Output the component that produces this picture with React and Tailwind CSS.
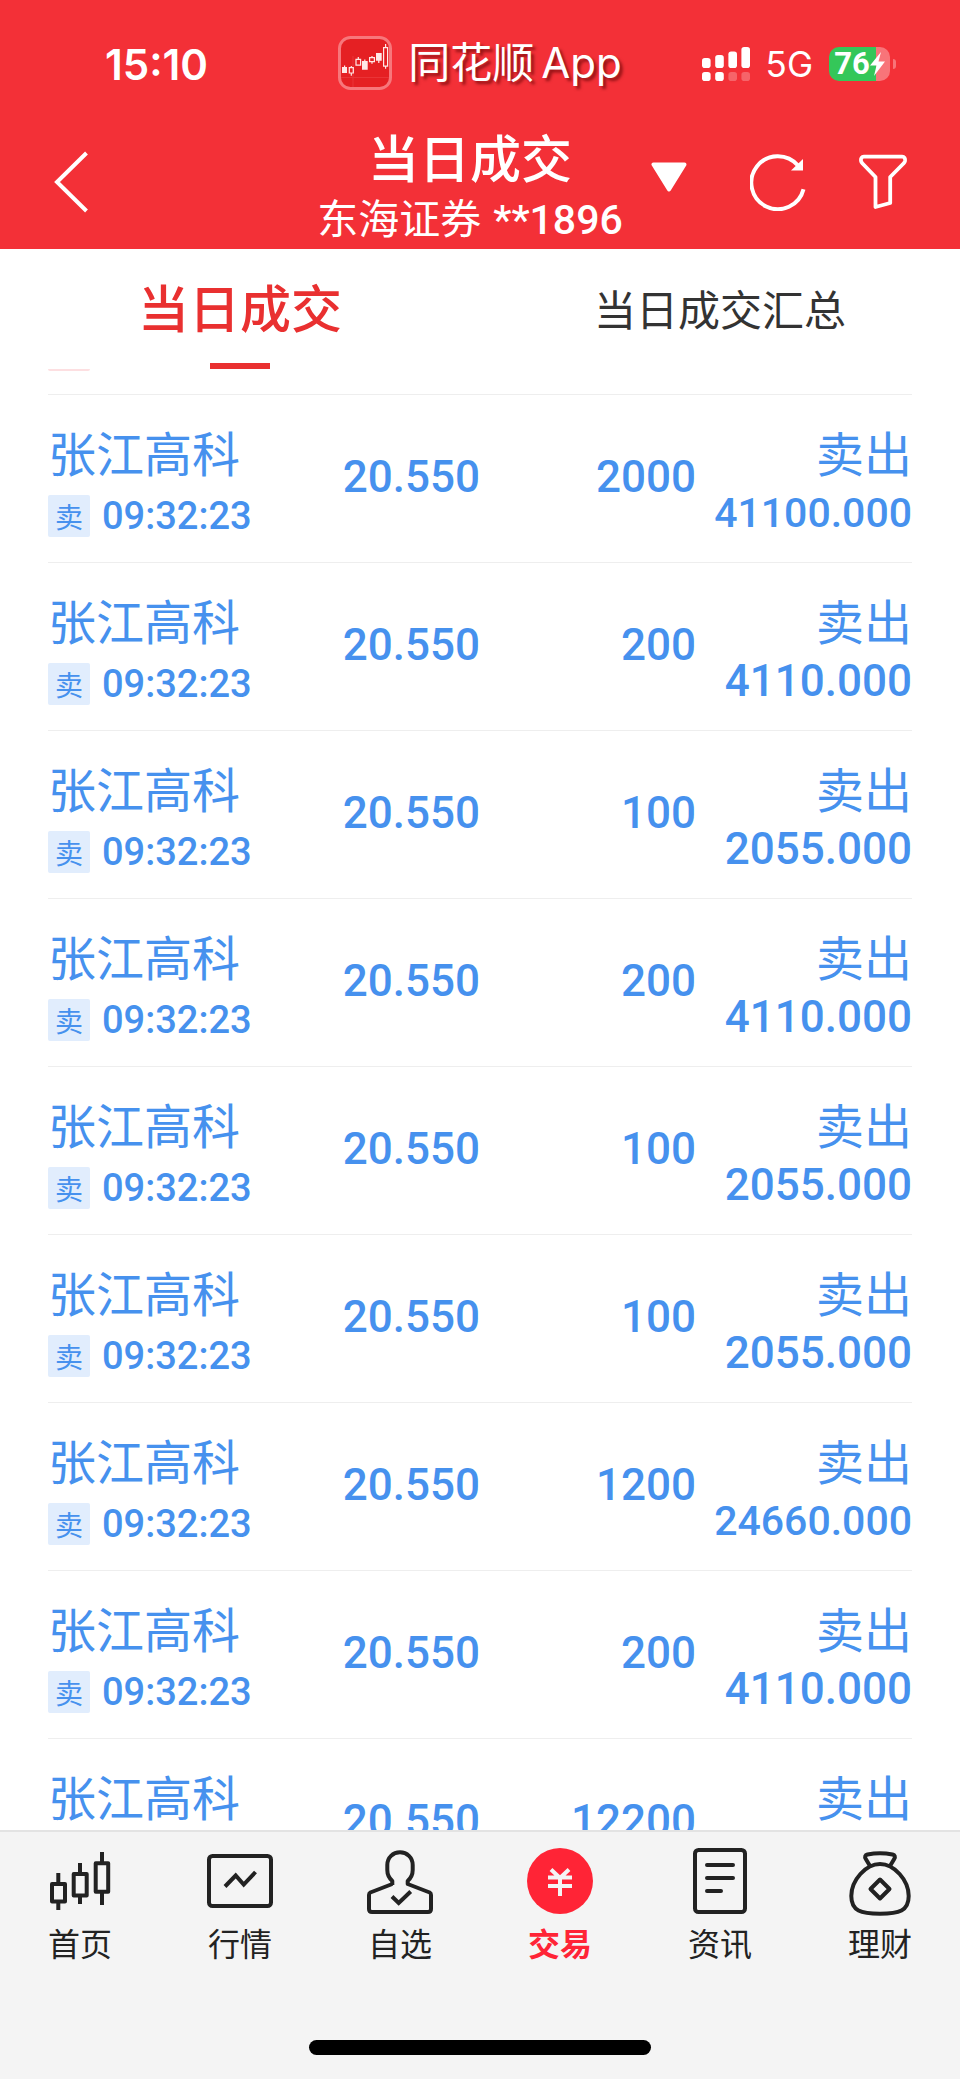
import React from "react";

const CJK = "font-['Noto_Sans_CJK_SC',sans-serif]";
const NUM = "font-['Roboto','Noto_Sans_CJK_SC',sans-serif]";
const SYS = "font-['Inter','Noto_Sans_CJK_SC',sans-serif]";

const trades = [
    { qty: "2000", amount: "41100.000" },
    { qty: "200", amount: "4110.000" },
    { qty: "100", amount: "2055.000" },
    { qty: "200", amount: "4110.000" },
    { qty: "100", amount: "2055.000" },
    { qty: "100", amount: "2055.000" },
    { qty: "1200", amount: "24660.000" },
    { qty: "200", amount: "4110.000" },
    { qty: "12200", amount: "250710.000" },
].map((t) => ({ name: "张江高科", time: "09:32:23", price: "20.550", ...t }));

function AppBadge() {
    return (
        <svg width="54" height="54" viewBox="0 0 54 54" aria-hidden="true">
            <rect x="1.5" y="1.5" width="51" height="51" rx="11" fill="#e52023" stroke="#f7777b" strokeWidth="3" />
            <path d="M3 41.5h48M15 20v31" stroke="#f0494c" strokeWidth="1" opacity=".5" />
            <g fill="#ffe9e6">
                <path d="M4 31h5v6H4zM6 29.500h1.200V32H6zM24 25h5.700v8.700H24zM26.200 23.500h1.200V26h-1.200zM38 17h5.700v7.700H38zM40.200 24h1.200v3h-1.200z" />
            </g>
            <g fill="none" stroke="#ffe9e6" strokeWidth="1.2">
                <path d="M11.300 31.600h4v5.400h-4zM13.300 30v1.600M13.300 37v2.700M18 23.300h4.600v5.800H18zM20.300 21v2.300M31.600 21.600h4.800v4h-4.800zM34 20v1.600M34 25.600v2.200M45.600 11.600h4v18.600h-4zM47.600 8v3.600M47.600 30.200v2.600" />
            </g>
        </svg>
    );
}

function Signal() {
    return (
        <svg width="48" height="34" viewBox="0 0 48 34" fill="#fff" aria-hidden="true">
            <rect x="0" y="11" width="8.600" height="10" rx="2.800" />
            <rect x="13.200" y="8" width="8.600" height="13" rx="2.800" />
            <rect x="26.400" y="4.500" width="8.600" height="16.500" rx="2.800" />
            <rect x="39.400" y="0" width="8.600" height="21" rx="2.800" />
            <rect x="0" y="25" width="8.600" height="9" rx="2.800" />
            <rect x="13.200" y="25" width="8.600" height="9" rx="2.800" />
            <rect x="26.400" y="25" width="8.600" height="9" rx="2.800" opacity=".25" />
            <rect x="39.400" y="25" width="8.600" height="9" rx="2.800" opacity=".25" />
        </svg>
    );
}

function Battery() {
    return (
        <div className="flex items-center">
            <div className="flex h-[34px] w-[61px] items-center justify-center rounded-[10px] bg-linear-to-r from-[#34c759] from-77% to-[#f87479] to-77%">
                <span className="font-['Roboto',sans-serif] text-[31px] leading-[34px] font-bold">76</span>
                <svg width="15" height="24" viewBox="0 0 15 24" fill="#fff" aria-hidden="true">
                    <path d="M11 0 0 13.500h6.500L4 24 15 9.500H8.500z" />
                </svg>
            </div>
            <div className="ml-[3px] h-[10px] w-[3px] rounded-r-full bg-[#f87479]" />
        </div>
    );
}

function StatusBar() {
    return (
        <div className={`grid h-[126px] grid-cols-[1fr_auto_1fr] items-center ${SYS}`}>
            <span className="pt-1 pl-[105px] text-[42px] leading-[48px] font-semibold">15:10</span>
            <div className="flex items-center gap-4">
                <AppBadge />
                <div className="flex gap-[7px] text-[42px] leading-[48px] [text-shadow:3px_3px_3px_rgba(90,0,0,0.6)]">
                    <span>同花顺</span>
                    <span>App</span>
                </div>
            </div>
            <div className="flex items-center justify-end gap-4 pt-[2px] pr-16">
                <Signal />
                <span className="text-[35px] leading-[40px]">5G</span>
                <Battery />
            </div>
        </div>
    );
}

function TitleBar() {
    return (
        <div className="grid h-[123px] grid-cols-[1fr_auto_1fr] pr-[52px] pl-8">
            <button aria-label="返回" className="h-[112px] w-[72px] pl-[22px]">
                <svg width="34" height="62" viewBox="0 0 34 62" fill="none" stroke="#fff" strokeWidth="4">
                    <path d="M32.500 2 3 31l29.500 29" />
                </svg>
            </button>
            <div className="flex flex-col items-center">
                <h1 className={`text-[51px] leading-[60px] font-medium ${CJK}`}>当日成交</h1>
                <p className="flex items-baseline gap-3 text-[41px] leading-[60px]">
                    <span className={CJK}>东海证券</span>
                    <span className={`font-medium ${NUM}`}>**1896</span>
                </p>
            </div>
            <div className="flex h-[112px] items-center justify-end gap-[52px]">
                <button aria-label="切换账户" className="mr-[11px]">
                    <svg width="36" height="40" viewBox="0 0 36 40" fill="#fff" stroke="#fff" strokeWidth="4" strokeLinejoin="round">
                        <path d="M2.500 2.500h31L18 27.500z" />
                    </svg>
                </button>
                <button aria-label="刷新">
                    <svg width="56" height="58" viewBox="0 0 56 58" fill="none" stroke="#fff" strokeWidth="4">
                        <path d="M53.500 36.200A26.500 26.500 0 1 1 48 12.500" />
                        <path d="M53 6v11.500H41z" fill="#fff" stroke="none" />
                    </svg>
                </button>
                <button aria-label="筛选">
                    <svg width="50" height="58" viewBox="0 0 50 58" fill="none" stroke="#fff" strokeWidth="3.8" strokeLinejoin="round">
                        <path d="M6 3.600h38q3.600.2 3 4.200-.3 1.600-1.500 2.700L32.200 24v26l-14.700 4V24L4.500 10.500Q3.200 9.400 3 7.800 2.500 3.800 6 3.600z" />
                    </svg>
                </button>
            </div>
        </div>
    );
}

function Tabs() {
    return (
        <div className={`grid h-[120px] shrink-0 grid-cols-2 bg-white ${CJK}`}>
            <button className="flex flex-col items-center justify-between pt-[27px] text-[#e93030]">
                <span className="text-[51px] leading-[60px] font-medium">当日成交</span>
                <span className="h-[6px] w-[60px] bg-[#e93030]" />
            </button>
            <button className="flex justify-center pt-[29px] text-[42px] leading-[60px] text-[#333]">当日成交汇总</button>
        </div>
    );
}

function TradeRow({ trade }) {
    // longer amounts drop a size so they stay inside the column
    const amountSize = trade.amount.length > 8 ? "text-[41px]" : "text-[44px]";
    return (
        <tr className="h-[168px] border-t border-[#eee]">
            <td>
                <div className={`text-[48px] leading-[56px] ${CJK}`}>{trade.name}</div>
                <div className="mt-[18px] flex h-[38px] items-center gap-3">
                    <span className={`h-[42px] w-[42px] rounded-xs bg-[#e1edfd] text-center text-[28px] leading-[42px] ${CJK}`}>卖</span>
                    <span className={`text-[38px] leading-[42px] font-medium ${NUM}`}>{trade.time}</span>
                </div>
            </td>
            <td className={`pb-1 text-right text-[44px] font-medium ${NUM}`}>{trade.price}</td>
            <td className={`pb-1 text-right text-[44px] font-medium ${NUM}`}>{trade.qty}</td>
            <td className="text-right">
                <div className={`text-[48px] leading-[56px] ${CJK}`}>卖出</div>
                <div className={`mt-3 leading-[44px] font-medium ${amountSize} ${NUM}`}>{trade.amount}</div>
            </td>
        </tr>
    );
}

function NavIcon({ name }) {
    if (name === "trade") {
        return (
            <svg width="66" height="66" viewBox="0 0 66 66" fill="none" stroke="#f4f4f4" strokeWidth="4" aria-hidden="true">
                <circle cx="33" cy="33" r="33" fill="#ff2436" stroke="none" />
                <path d="M24 21.500l9 8.500 9-8.500M21 29.500h24M21 38h24M33 29v19" />
            </svg>
        );
    }
    return (
        <svg width="66" height="66" viewBox="0 0 66 66" className="overflow-visible" fill="none" stroke="#222" strokeWidth="4" strokeLinejoin="round" aria-hidden="true">
            {name === "home" && (
                <path d="M5 36h13v17.500H5zM11.300 25v11M11.300 53.500V62M26.700 26h13v21.500h-13zM33 15v11M33 47.500V56M48.700 15.300h12.500v28.500H48.700zM55 4v11.300M55 43.800V57" />
            )}
            {name === "market" && (
                <>
                    <rect x="2" y="8" width="62" height="50" rx="3.500" />
                    <path d="M18 38.500l10.700-11 8 9L48.500 24" strokeLinejoin="miter" />
                </>
            )}
            {name === "watch" && (
                <>
                    <path d="M25.300 37v-4C22 30 20.300 27 20.300 22v-5C20.300 9.500 26 4.300 33 4.300S45.700 9.500 45.700 17v5c0 5-1.700 8-5 11v3l22 8.500q1.300.7 1.300 2.500v14q0 3-3 3H5q-3 0-3-3V47q0-1.800 1.300-2.500l22-8.500" />
                    <path d="M25 48.500l6.700 6.500 12-11.500" strokeLinejoin="miter" />
                </>
            )}
            {name === "news" && (
                <>
                    <rect x="8" y="2" width="50" height="62" rx="3.500" />
                    <path d="M20 17h26M20 30h26M20 43h14" strokeLinecap="round" />
                </>
            )}
            {name === "wealth" && (
                <>
                    <path d="M33 16C19 16 4.300 32 4.300 48 4.300 63 14 65.700 33 65.700S61.700 63 61.700 48C61.700 32 47 16 33 16z" />
                    <path d="M23 18l-4.200-7q-2-3.500 1.700-4.500 12.500-2.500 25 0 3.700 1 1.700 4.500L43 18M33 31.500l9.500 9.500-9.500 9.500-9.500-9.500z" />
                </>
            )}
        </svg>
    );
}

const navItems = [
    { id: "home", label: "首页" },
    { id: "market", label: "行情" },
    { id: "watch", label: "自选" },
    { id: "trade", label: "交易" },
    { id: "news", label: "资讯" },
    { id: "wealth", label: "理财" },
];

function BottomNav() {
    return (
        <nav className={`shrink-0 border-t-2 border-[#e3e3e3] bg-[#f4f4f4] pt-4 pb-6 ${CJK}`}>
            <div className="grid grid-cols-6">
                {navItems.map((item) => (
                    <a
                        key={item.id}
                        href={`#${item.id}`}
                        className={`flex flex-col items-center gap-2 text-[32px] leading-[40px] ${item.id === "trade" ? "font-bold text-[#ff2436]" : "text-[#222]"}`}
                    >
                        <NavIcon name={item.id} />
                        {item.label}
                    </a>
                ))}
            </div>
            <div className="mx-auto mt-[78px] h-[15px] w-[342px] rounded-full bg-black" />
        </nav>
    );
}

export default function App() {
    return (
        <div className="flex h-screen flex-col overflow-hidden bg-white">
            <header className="shrink-0 bg-[#f33037] text-white">
                <StatusBar />
                <TitleBar />
            </header>
            <Tabs />
            <main className="min-h-0 flex-1 overflow-hidden px-12">
                <div className="mb-[23px] h-[2px] w-[42px] rounded-b-sm bg-[#fddfe1]" />
                <table className="w-full table-fixed border-collapse text-[#4691ee]">
                    <tbody>
                        {trades.map((trade, i) => (
                            <TradeRow key={i} trade={trade} />
                        ))}
                    </tbody>
                </table>
            </main>
            <BottomNav />
        </div>
    );
}
